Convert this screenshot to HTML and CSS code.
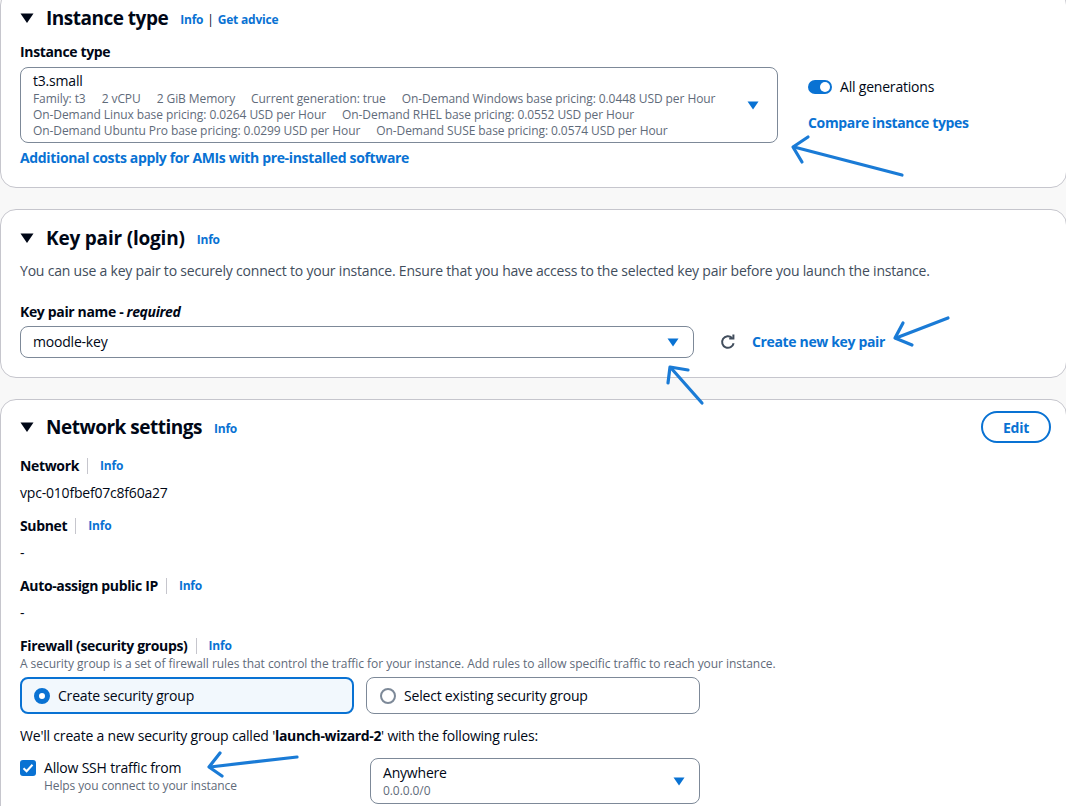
FILE: index.html
```html
<!DOCTYPE html>
<html lang="en">
<head>
<meta charset="utf-8">
<title>Launch instance</title>
<link rel="stylesheet" href="styles.css">
</head>
<body>
<div class="page">
  <section class="card card-first">
    <div class="card-head">
      <svg class="caret" viewBox="0 0 14 12" width="14" height="12"><path d="M0.5 1.5 H13.5 L7 11 Z" fill="#000716"/></svg>
      <h2 class="title">Instance type</h2>
      <span class="head-links"><a class="info">Info</a><span class="bar">|</span><a class="info">Get advice</a></span>
    </div>
    <div class="label label-first">Instance type</div>
    <div class="instance-row">
      <div class="select select-multi">
        <div class="sel-text">
          <div class="sel-main">t3.small</div>
          <div class="sel-sub"><span>Family: t3</span><span>2 vCPU</span><span>2 GiB Memory</span><span>Current generation: true</span><span>On-Demand Windows base pricing: 0.0448 USD per Hour</span></div>
          <div class="sel-sub"><span>On-Demand Linux base pricing: 0.0264 USD per Hour</span><span>On-Demand RHEL base pricing: 0.0552 USD per Hour</span></div>
          <div class="sel-sub"><span>On-Demand Ubuntu Pro base pricing: 0.0299 USD per Hour</span><span>On-Demand SUSE base pricing: 0.0574 USD per Hour</span></div>
        </div>
        <svg class="sel-caret" viewBox="0 0 12 9" width="12" height="9"><path d="M0.5 0.5 H11.5 L6 8.5 Z" fill="#0972d3"/></svg>
      </div>
      <div class="side">
        <div class="toggle-row"><span class="toggle"><span class="knob"></span></span><span>All generations</span></div>
        <a class="link-bold">Compare instance types</a>
      </div>
    </div>
    <a class="link-bold extra">Additional costs apply for AMIs with pre-installed software</a>
  </section>

  <section class="card">
    <div class="card-head">
      <svg class="caret" viewBox="0 0 14 12" width="14" height="12"><path d="M0.5 1.5 H13.5 L7 11 Z" fill="#000716"/></svg>
      <h2 class="title title-key">Key pair (login)</h2>
      <span class="head-links"><a class="info">Info</a></span>
    </div>
    <p class="desc">You can use a key pair to securely connect to your instance. Ensure that you have access to the selected key pair before you launch the instance.</p>
    <div class="label label-key">Key pair name - <em>required</em></div>
    <div class="key-row">
      <div class="select select-key">
        <span class="sel-main">moodle-key</span>
        <svg class="sel-caret" viewBox="0 0 12 9" width="12" height="9"><path d="M0.5 0.5 H11.5 L6 8.5 Z" fill="#0972d3"/></svg>
      </div>
      <svg class="refresh" viewBox="0 0 16 16" width="16" height="16"><path d="M13.6 9.2 A5.8 5.8 0 1 1 12 3.9" fill="none" stroke="#414d5c" stroke-width="2"/><path d="M9.2 4.6 H13.4 V0.4" fill="none" stroke="#414d5c" stroke-width="2" stroke-linejoin="miter"/></svg>
      <a class="link-bold">Create new key pair</a>
    </div>
  </section>

  <section class="card card-net">
    <div class="card-head">
      <svg class="caret" viewBox="0 0 14 12" width="14" height="12"><path d="M0.5 1.5 H13.5 L7 11 Z" fill="#000716"/></svg>
      <h2 class="title">Network settings</h2>
      <span class="head-links"><a class="info">Info</a></span>
      <button class="edit">Edit</button>
    </div>
    <div class="kv kv-first"><span class="kv-label">Network</span><a class="info sep">Info</a></div>
    <div class="value">vpc-010fbef07c8f60a27</div>
    <div class="kv"><span class="kv-label">Subnet</span><a class="info sep">Info</a></div>
    <div class="value">-</div>
    <div class="kv"><span class="kv-label">Auto-assign public IP</span><a class="info sep">Info</a></div>
    <div class="value">-</div>
    <div class="kv"><span class="kv-label">Firewall (security groups)</span><a class="info sep">Info</a></div>
    <div class="small-desc">A security group is a set of firewall rules that control the traffic for your instance. Add rules to allow specific traffic to reach your instance.</div>
    <div class="tiles">
      <div class="tile tile-on"><span class="radio radio-on"></span><span>Create security group</span></div>
      <div class="tile"><span class="radio"></span><span>Select existing security group</span></div>
    </div>
    <div class="create-note">We'll create a new security group called '<b>launch-wizard-2</b>' with the following rules:</div>
    <div class="ssh-row">
      <div class="check-group">
        <div class="check-line">
          <span class="checkbox"><svg viewBox="0 0 16 16" width="16" height="16"><path d="M3.5 8.2 L6.6 11.2 L12.5 4.8" fill="none" stroke="#fff" stroke-width="2"/></svg></span>
          <span>Allow SSH traffic from</span>
        </div>
        <div class="check-help">Helps you connect to your instance</div>
      </div>
      <div class="select select-any">
        <div class="sel-text">
          <div class="sel-main">Anywhere</div>
          <div class="sel-sub">0.0.0.0/0</div>
        </div>
        <svg class="sel-caret" viewBox="0 0 12 9" width="12" height="9"><path d="M0.5 0.5 H11.5 L6 8.5 Z" fill="#0972d3"/></svg>
      </div>
    </div>
  </section>
</div>

<svg class="annot" viewBox="0 0 1066 806" width="1066" height="806">
  <g fill="none" stroke="#1a7bd6" stroke-width="3.2" stroke-linecap="round" stroke-linejoin="round">
    <path d="M902 175 L794 147"/>
    <path d="M808 137 L793 147 L802 162"/>
    <path d="M948 318 L896 338"/>
    <path d="M903 323 L895 338 L912 345"/>
    <path d="M702 403 L671 368"/>
    <path d="M688 370 L670 367 L668 383"/>
    <path d="M297 757 L210 767"/>
    <path d="M220 753 L209 767 L222 776"/>
  </g>
</svg>
</body>
</html>
```
FILE: styles.css
```css
* { box-sizing: border-box; }
html, body { margin: 0; padding: 0; }
body {
  background: #f8f8f8;
  font-family: "Open Sans", "Noto Sans", Arial, sans-serif;
  font-size: 14px;
  line-height: 20px;
  letter-spacing: -0.2px;
  color: #000716;
  width: 1066px;
  height: 806px;
  overflow: hidden;
  position: relative;
}
a { color: #0972d3; text-decoration: none; }
b { letter-spacing: -0.35px; }
.page { display: flex; flex-direction: column; }
.card {
  background: #fff;
  border: 1px solid #c6c6cd;
  border-radius: 16px;
  padding: 14px 15px 19px 19px;
  margin-top: 21px;
  width: 1067px;
}
.card-first { margin-top: -11px; }
.card-net { padding-top: 13px; }
.card-head { display: flex; align-items: center; height: 28px; }
.caret { margin: 0 12px 0 0; flex: none; }
.title { margin: 0; font-size: 19px; line-height: 28px; font-weight: 700; letter-spacing: -0.5px; }
.title-key { letter-spacing: -0.2px; }
.head-links { margin-left: 12px; font-size: 12px; font-weight: 700; display: flex; align-items: center; padding-top: 3px; }
.head-links .bar { color: #000716; font-weight: 400; margin: 0 4px; }
.info { font-size: 12px; font-weight: 700; color: #0972d3; letter-spacing: -0.2px; }
.label { font-weight: 700; letter-spacing: -0.35px; }
.label-first { margin-top: 10px; }
.label em { font-style: italic; }
.instance-row { display: flex; margin-top: 5px; gap: 30px; }
.select {
  border: 1px solid #7d8998;
  border-radius: 8px;
  display: flex;
  align-items: center;
  justify-content: space-between;
  padding: 3px 18px 3px 12px;
}
.select-multi { width: 758px; height: 76px; }
.sel-main { font-size: 14px; line-height: 20px; }
.sel-sub { font-size: 12px; line-height: 16px; color: #5f6b7a; display: flex; gap: 16px; white-space: nowrap; letter-spacing: -0.08px; }
.sel-caret { flex: none; }
.side { padding-top: 10px; display: flex; flex-direction: column; gap: 16px; }
.toggle-row { display: flex; align-items: center; gap: 8px; }
.toggle { width: 24px; height: 14px; border-radius: 7px; background: #0972d3; position: relative; display: inline-block; }
.knob { position: absolute; right: 2px; top: 2px; width: 10px; height: 10px; border-radius: 50%; background: #fff; }
.link-bold { font-weight: 700; color: #0972d3; letter-spacing: -0.35px; }
.extra { display: block; margin-top: 5px; }
.desc { margin: 9px 0 0; color: #414d5c; }
.label-key { margin-top: 21px; }
.key-row { display: flex; align-items: center; margin-top: 4px; }
.select-key { width: 674px; height: 32px; padding: 0 14px 0 12px; }
.refresh { margin-left: 26px; }
.key-row .link-bold { margin-left: 16px; }
.edit {
  margin-left: auto;
  width: 70px;
  height: 32px;
  border: 2px solid #0972d3;
  border-radius: 20px;
  background: #fff;
  color: #0972d3;
  font-family: inherit;
  font-weight: 700;
  font-size: 14px;
  letter-spacing: -0.3px;
  padding: 0;
}
.kv { display: flex; align-items: center; margin-top: 13px; }
.kv-first { margin-top: 15px; }
.kv-label { font-weight: 700; letter-spacing: -0.35px; }
.sep { border-left: 1px solid #c6c6cd; margin-left: 8px; padding-left: 12px; line-height: 16px; }
.value { margin-top: 7px; }
.small-desc { font-size: 12px; line-height: 16px; color: #5f6b7a; letter-spacing: -0.05px; }
.tiles { display: flex; gap: 12px; margin-top: 5px; }
.tile {
  width: 334px;
  height: 37px;
  border: 1px solid #7d8998;
  border-radius: 8px;
  display: flex;
  align-items: center;
  gap: 8px;
  padding-left: 13px;
}
.tile-on { border: 2px solid #0972d3; background: #f2f8fd; padding-left: 12px; }
.radio { width: 16px; height: 16px; border-radius: 50%; border: 2px solid #7d8998; background: #fff; flex: none; }
.radio-on { border: 5px solid #0972d3; }
.create-note { margin-top: 12px; }
.ssh-row { display: flex; margin-top: 12px; }
.check-group { width: 350px; }
.check-line { display: flex; align-items: center; gap: 8px; }
.checkbox { width: 16px; height: 16px; border-radius: 3px; background: #0972d3; display: inline-flex; }
.check-help { font-size: 12px; line-height: 16px; color: #5f6b7a; margin-left: 24px; letter-spacing: -0.1px; }
.select-any { width: 330px; height: 46px; padding: 3px 14px 3px 12px; }
.annot { position: absolute; left: 0; top: 0; pointer-events: none; }
```
